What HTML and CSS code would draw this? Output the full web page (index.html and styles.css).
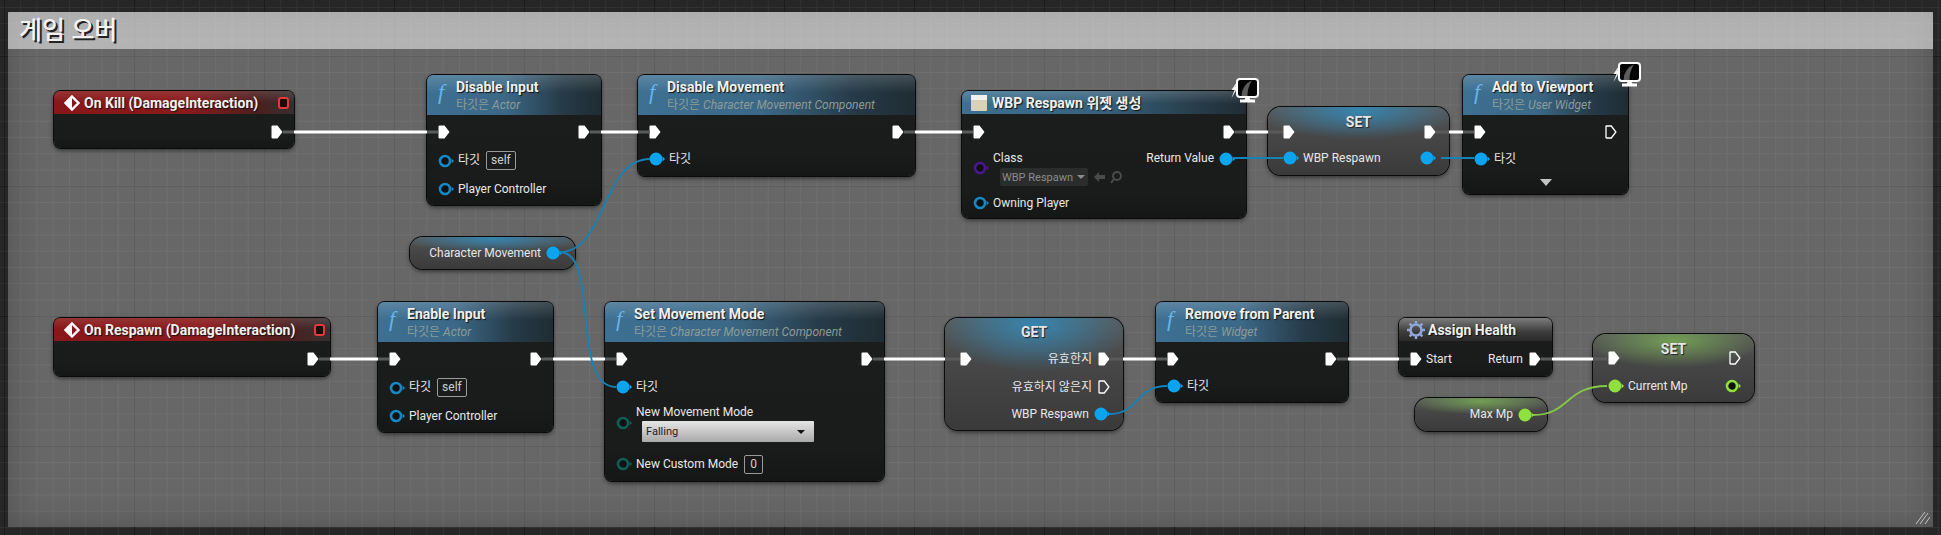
FILE: index.html

```html
<!DOCTYPE html>
<html lang="ko">
<head>
  <meta charset="UTF-8" />
  <title>게임 오버</title>
  <link rel="stylesheet" href="styles.css">
</head>
<body>
  <svg class="defs" width="0" height="0">
    <symbol id="pin-exec" viewBox="0 0 12 14"><path d="M1.5 .5H6.5L11.5 7L6.5 13.5H1.5Q.5 13.5 .5 12.5V1.5Q.5 .5 1.5 .5Z" fill="#fff"/></symbol>
    <symbol id="pin-exec-open" viewBox="0 0 12 14"><path d="M1.5 1H6.3L10.9 7L6.3 13H1.5Q1 13 1 12.5V1.5Q1 1 1.5 1Z" fill="none" stroke="#fff" stroke-width="1.3"/></symbol>
    <symbol id="pin-data" viewBox="0 0 16 14"><circle cx="7" cy="7" r="6.5" fill="currentColor"/><path d="M13.6 4.6L16 7L13.6 9.4Z" fill="currentColor"/></symbol>
    <symbol id="pin-ring" viewBox="0 0 16 14"><circle cx="7" cy="7" r="5" fill="#111" stroke="currentColor" stroke-width="2.6"/><path d="M13.6 4.6L16 7L13.6 9.4Z" fill="currentColor"/></symbol>
    <symbol id="ico-monitor" viewBox="0 0 30 25">
      <path d="M7.500 3L1.500 12H4.500L1.500 20L8 9H5.500Z" fill="#f4f4f4"/>
      <rect x="7" y="1" width="21" height="18" rx="3" fill="#050505" stroke="#fff" stroke-width="2"/>
      <path d="M11.500 18Q12.500 6 22 2.500Q17.500 9 17.500 18Z" fill="#5c5c5c"/>
      <path d="M15.500 20H19.500L20.500 21.500H25V24.500H10V21.500H14.500Z" fill="#fff"/>
    </symbol>
  </svg>

  <div class="graph">
    <div class="comment">
      <div class="comment-title">게임 오버</div>
      <svg class="grip" width="15" height="13" viewBox="0 0 15 13"><path d="M1 13L10 1M5 13L13 2M10 13L15 6" stroke="#c4c4c4" stroke-width="1" fill="none"/></svg>
    </div>

    <div class="node n-onkill">
      <div class="node-head head-event">
        <svg class="ico-event" width="16" height="16" viewBox="0 0 16 16"><path d="M8 1.500L14.500 8L8 14.500L1.500 8Z" fill="none" stroke="#fff" stroke-width="2.400"/><path d="M8 2V14L2 8Z" fill="#fff"/></svg>
        <span class="title">On Kill (DamageInteraction)</span>
        <i class="event-stop"></i>
      </div>
      <div class="node-body body-single">
        <div class="row row-end"><svg class="pin-x"><use href="#pin-exec"/></svg></div>
      </div>
    </div>

    <div class="node n-disable-input">
      <div class="node-head head-func">
        <span class="fn">f</span>
        <div><div class="title">Disable Input</div><div class="sub">타깃은 <em>Actor</em></div></div>
      </div>
      <div class="node-body">
        <div class="row"><svg class="pin-x"><use href="#pin-exec"/></svg><span class="grow"></span><svg class="pin-x"><use href="#pin-exec"/></svg></div>
        <div class="row row-30"><svg class="pin blue"><use href="#pin-ring"/></svg><span class="label">타깃</span><span class="self">self</span></div>
        <div class="row"><svg class="pin blue"><use href="#pin-ring"/></svg><span class="label">Player Controller</span></div>
      </div>
    </div>

    <div class="node n-disable-move">
      <div class="node-head head-func">
        <span class="fn">f</span>
        <div><div class="title">Disable Movement</div><div class="sub">타깃은 <em>Character Movement Component</em></div></div>
      </div>
      <div class="node-body">
        <div class="row"><svg class="pin-x"><use href="#pin-exec"/></svg><span class="grow"></span><svg class="pin-x"><use href="#pin-exec"/></svg></div>
        <div class="row row-short"><svg class="pin sky"><use href="#pin-data"/></svg><span class="label">타깃</span></div>
      </div>
    </div>

    <div class="node n-create">
      <div class="node-head head-func head-slim">
        <svg class="ico-widget" width="16" height="16" viewBox="0 0 16 16"><rect width="16" height="16" rx="1" fill="#d9d2b6"/><rect width="16" height="5" fill="#f1f1ef"/></svg>
        <span class="title">WBP Respawn 위젯 생성</span>
      </div>
      <div class="node-body body-single">
        <div class="row"><svg class="pin-x"><use href="#pin-exec"/></svg><span class="grow"></span><svg class="pin-x"><use href="#pin-exec"/></svg></div>
        <div class="row row-class">
          <svg class="pin purple"><use href="#pin-ring"/></svg>
          <div>
            <div class="label">Class</div>
            <div class="class-pick">
              <span class="class-box">WBP Respawn<i class="caret caret-dim"></i></span>
              <svg width="32" height="14" viewBox="0 0 32 14"><path d="M1 7L6 2V5H12V9H6V12Z" fill="#4a4a4a"/><circle cx="24" cy="6" r="4" fill="none" stroke="#4a4a4a" stroke-width="2"/><path d="M21 9L18 13" stroke="#4a4a4a" stroke-width="2"/></svg>
            </div>
          </div>
          <span class="grow"></span>
          <span class="label return-label">Return Value</span>
          <svg class="pin sky pin-top"><use href="#pin-data"/></svg>
        </div>
        <div class="row"><svg class="pin blue"><use href="#pin-ring"/></svg><span class="label">Owning Player</span></div>
      </div>
      <svg class="ico-monitor" width="30" height="25"><use href="#ico-monitor"/></svg>
    </div>

    <div class="node compact glow-blue n-set-widget">
      <div class="compact-title">SET</div>
      <div class="row"><svg class="pin-x"><use href="#pin-exec"/></svg><span class="grow"></span><svg class="pin-x"><use href="#pin-exec"/></svg></div>
      <div class="row row-24"><svg class="pin sky"><use href="#pin-data"/></svg><span class="label">WBP Respawn</span><span class="grow"></span><svg class="pin sky"><use href="#pin-data"/></svg></div>
    </div>

    <div class="node n-viewport">
      <div class="node-head head-func">
        <span class="fn">f</span>
        <div><div class="title">Add to Viewport</div><div class="sub">타깃은 <em>User Widget</em></div></div>
      </div>
      <div class="node-body">
        <div class="row"><svg class="pin-x"><use href="#pin-exec"/></svg><span class="grow"></span><svg class="pin-x"><use href="#pin-exec-open"/></svg></div>
        <div class="row row-short"><svg class="pin sky"><use href="#pin-data"/></svg><span class="label">타깃</span></div>
        <div class="expand"><i class="caret caret-big"></i></div>
      </div>
      <svg class="ico-monitor" width="30" height="25"><use href="#ico-monitor"/></svg>
    </div>

    <div class="node compact glow-blue glow-thin n-char-move">
      <div class="row row-end"><span class="label">Character Movement</span><svg class="pin sky"><use href="#pin-data"/></svg></div>
    </div>

    <div class="node n-onrespawn">
      <div class="node-head head-event">
        <svg class="ico-event" width="16" height="16" viewBox="0 0 16 16"><path d="M8 1.500L14.500 8L8 14.500L1.500 8Z" fill="none" stroke="#fff" stroke-width="2.400"/><path d="M8 2V14L2 8Z" fill="#fff"/></svg>
        <span class="title">On Respawn (DamageInteraction)</span>
        <i class="event-stop"></i>
      </div>
      <div class="node-body body-single">
        <div class="row row-end"><svg class="pin-x"><use href="#pin-exec"/></svg></div>
      </div>
    </div>

    <div class="node n-enable-input">
      <div class="node-head head-func">
        <span class="fn">f</span>
        <div><div class="title">Enable Input</div><div class="sub">타깃은 <em>Actor</em></div></div>
      </div>
      <div class="node-body">
        <div class="row"><svg class="pin-x"><use href="#pin-exec"/></svg><span class="grow"></span><svg class="pin-x"><use href="#pin-exec"/></svg></div>
        <div class="row row-30"><svg class="pin blue"><use href="#pin-ring"/></svg><span class="label">타깃</span><span class="self">self</span></div>
        <div class="row"><svg class="pin blue"><use href="#pin-ring"/></svg><span class="label">Player Controller</span></div>
      </div>
    </div>

    <div class="node n-move-mode">
      <div class="node-head head-func">
        <span class="fn">f</span>
        <div><div class="title">Set Movement Mode</div><div class="sub">타깃은 <em>Character Movement Component</em></div></div>
      </div>
      <div class="node-body">
        <div class="row"><svg class="pin-x"><use href="#pin-exec"/></svg><span class="grow"></span><svg class="pin-x"><use href="#pin-exec"/></svg></div>
        <div class="row"><svg class="pin sky"><use href="#pin-data"/></svg><span class="label">타깃</span></div>
        <div class="row row-mode">
          <svg class="pin teal"><use href="#pin-ring"/></svg>
          <div>
            <div class="label">New Movement Mode</div>
            <div class="enum-box">Falling<i class="caret"></i></div>
          </div>
        </div>
        <div class="row"><svg class="pin teal"><use href="#pin-ring"/></svg><span class="label">New Custom Mode</span><span class="self self-num">0</span></div>
      </div>
    </div>

    <div class="node compact glow-blue n-get">
      <div class="compact-title">GET</div>
      <div class="row"><svg class="pin-x"><use href="#pin-exec"/></svg><span class="grow"></span><span class="label">유효한지</span><svg class="pin-x"><use href="#pin-exec"/></svg></div>
      <div class="row row-end"><span class="label">유효하지 않은지</span><svg class="pin-x"><use href="#pin-exec-open"/></svg></div>
      <div class="row row-end row-short"><span class="label">WBP Respawn</span><svg class="pin sky"><use href="#pin-data"/></svg></div>
    </div>

    <div class="node n-remove">
      <div class="node-head head-func">
        <span class="fn">f</span>
        <div><div class="title">Remove from Parent</div><div class="sub">타깃은 <em>Widget</em></div></div>
      </div>
      <div class="node-body">
        <div class="row"><svg class="pin-x"><use href="#pin-exec"/></svg><span class="grow"></span><svg class="pin-x"><use href="#pin-exec"/></svg></div>
        <div class="row row-short"><svg class="pin sky"><use href="#pin-data"/></svg><span class="label">타깃</span></div>
      </div>
    </div>

    <div class="node n-assign">
      <div class="node-head head-macro">
        <svg class="ico-gear" width="20" height="20" viewBox="0 0 20 20"><circle cx="10" cy="10" r="5.500" fill="none" stroke="#8fa6d8" stroke-width="2.600"/><path d="M10 1V4M10 16V19M1 10H4M16 10H19M3.600 3.600L5.800 5.800M14.200 14.200L16.400 16.400M3.600 16.400L5.800 14.200M14.200 5.800L16.400 3.600" stroke="#8fa6d8" stroke-width="2.400"/></svg>
        <span class="title">Assign Health</span>
      </div>
      <div class="node-body body-single">
        <div class="row"><svg class="pin-x"><use href="#pin-exec"/></svg><span class="label">Start</span><span class="grow"></span><span class="label">Return</span><svg class="pin-x"><use href="#pin-exec"/></svg></div>
      </div>
    </div>

    <div class="node compact glow-green glow-thin n-max-mp">
      <div class="row row-end"><span class="label">Max Mp</span><svg class="pin lime"><use href="#pin-data"/></svg></div>
    </div>

    <div class="node compact glow-green n-set-mp">
      <div class="compact-title">SET</div>
      <div class="row"><svg class="pin-x"><use href="#pin-exec"/></svg><span class="grow"></span><svg class="pin-x"><use href="#pin-exec-open"/></svg></div>
      <div class="row"><svg class="pin lime"><use href="#pin-data"/></svg><span class="label">Current Mp</span><span class="grow"></span><svg class="pin lime"><use href="#pin-ring"/></svg></div>
    </div>

    <svg class="wires" width="1941" height="535" viewBox="0 0 1941 535" fill="none">
      <g class="wire-stub">
        <path d="M283 132H294M427 132H438M590 132H601M638 132H650M904 132H915M962 132H973M1235 132H1246M1268 132H1283M1436 132H1449M1463 132H1474"/>
        <path d="M319 359H330M378 359H389M542 359H553M605 359H616M873 359H884M945 359H960M1109 359H1123M1156 359H1167M1337 359H1348M1399 359H1410M1541 359H1552M1593 359H1607"/>
      </g>
      <g class="wire-exec">
        <path d="M294 132H427M601 132H638M915 132H962M1246 132H1268M1449 132H1463"/>
        <path d="M330 359H378M553 359H605M884 359H945M1123 359H1156M1348 359H1399M1552 359H1593"/>
      </g>
      <g class="wire-obj">
        <path d="M560 252C606 252 602 159 650 159"/>
        <path d="M560 252C600 252 570 387 616 387"/>
        <path d="M1234 158H1283M1441 158H1474"/>
        <path d="M1109 414C1140 414 1135 386 1167 386"/>
      </g>
      <path class="wire-float" d="M1533 415C1570 415 1565 386 1607 386"/>
    </svg>
  </div>
</body>
</html>
```

FILE: styles.css

```css
* {
  box-sizing: border-box;
}

body {
  margin: 0;
  background: #262626;
  font-family: Roboto, "Noto Sans CJK KR", sans-serif;
  font-size: 12px;
  color: #e8e8e8;
}

.defs {
  position: absolute;
}

.graph {
  position: relative;
  width: 1941px;
  height: 535px;
  overflow: hidden;
  background-color: #262626;
  background-image:
    linear-gradient(90deg, #1b1b1b 1px, transparent 1px),
    linear-gradient(#1b1b1b 1px, transparent 1px),
    linear-gradient(90deg, #323232 1px, transparent 1px),
    linear-gradient(#323232 1px, transparent 1px);
  background-size: 130px 130px, 130px 130px, 16.25px 16.25px, 16.25px 16.25px;
  background-position: 4px 56px, 4px 56px, 4px 7px, 4px 7px;
}

/* comment box */
.comment {
  position: absolute;
  left: 8px;
  top: 12px;
  width: 1925px;
  height: 515px;
  background: rgba(255, 255, 255, 0.3);
  border-radius: 2px 2px 0 0;
  box-shadow: inset 0 0 32px rgba(0, 0, 0, 0.22);
}

.comment-title {
  height: 37px;
  padding-left: 11px;
  background: rgba(255, 255, 255, 0.5);
  font-size: 25px;
  font-weight: 500;
  line-height: 37px;
  color: #f2f2f2;
  text-shadow: 2px 2px 0 #222;
}

.grip {
  position: absolute;
  right: 3px;
  bottom: 3px;
}

/* nodes */
.node {
  position: absolute;
  background: linear-gradient(#1c1e1d, #1a1c1b 80%, #151716);
  border-radius: 7px;
  box-shadow: 0 0 0 1px #0b0b0b, 0 2px 5px rgba(0, 0, 0, 0.6);
}

.node-head {
  display: flex;
  align-items: flex-start;
  height: 40px;
  padding: 3px 8px 0 11px;
  border-radius: 6px 6px 0 0;
}

.head-func {
  background:
    linear-gradient(rgba(255, 255, 255, 0.16), rgba(255, 255, 255, 0) 45%),
    linear-gradient(90deg, #3d7093, #3b6886 45%, #263a47 78%, #1f2c33);
}

.head-slim {
  height: 23px;
  align-items: center;
  padding: 0 8px 0 9px;
  background:
    linear-gradient(rgba(255, 255, 255, 0.16), rgba(255, 255, 255, 0) 55%),
    linear-gradient(90deg, #3d7093, #37617c 50%, #263a47 85%, #222c32);
}

.head-event {
  height: 23px;
  align-items: center;
  padding: 0 5px 0 10px;
  background:
    linear-gradient(rgba(255, 255, 255, 0.12), rgba(255, 255, 255, 0) 50%),
    linear-gradient(90deg, #881719, #8a1a1b 55%, #4c1f1f 85%, #353030);
}

.head-macro {
  height: 23px;
  align-items: center;
  padding: 0 8px 0 7px;
  background: linear-gradient(#7d7d7d, #3c3c3c 60%, #2a2a2a);
}

.title {
  font-size: 14px;
  font-weight: 700;
  line-height: 18px;
  color: #f0f0f0;
  text-shadow: 1px 1px 1px #111;
  white-space: nowrap;
}

.sub {
  font-size: 12px;
  line-height: 18px;
  color: #8d9b97;
  white-space: nowrap;
}

.fn {
  width: 18px;
  margin-top: 1px;
  font-family: "Liberation Serif", serif;
  font-size: 22px;
  font-style: italic;
  line-height: 26px;
  color: #68b4ec;
}

.ico-event {
  flex: none;
  margin-right: 4px;
}

.ico-widget {
  flex: none;
  margin-right: 5px;
}

.ico-gear {
  flex: none;
  margin-right: 2px;
}

.ico-monitor {
  position: absolute;
  top: -13px;
  right: -14px;
}

.event-stop {
  flex: none;
  width: 11px;
  height: 12px;
  margin-left: auto;
  background: #1c0a0a;
  border: 2px solid #e23a3a;
  border-radius: 3px;
}

.node-body {
  padding-top: 3px;
}

.body-single {
  padding-top: 4px;
}

/* rows and pins */
.row {
  display: flex;
  align-items: center;
  gap: 4px;
  height: 28px;
  padding: 0 11px;
  white-space: nowrap;
}

.row-end {
  justify-content: flex-end;
}

.row-short {
  height: 26px;
}

.row-24 {
  height: 24px;
}

.row-30 {
  height: 29px;
}

.row-class {
  align-items: flex-start;
  height: 43px;
  padding-top: 4px;
}

.row-mode {
  align-items: flex-start;
  height: 49px;
  padding-top: 3px;
}

.grow {
  flex: 1;
}

.label {
  line-height: 17px;
}

.label + .pin-x {
  margin-left: 2px;
}

.label + .pin {
  margin-left: 1px;
}

.pin-x {
  flex: none;
  width: 12px;
  height: 14px;
}

.pin {
  flex: none;
  width: 16px;
  height: 14px;
}

.pin-top {
  margin-top: 2px;
}

.row-class > .pin:first-child {
  margin-top: 11px;
}

.row-mode > .pin:first-child {
  margin-top: 12px;
}

.blue { color: #1689c4; }
.sky { color: #0aa4f0; }
.purple { color: #4a1691; }
.teal { color: #0f5f56; }
.lime { color: #8fe23e; }

.self {
  margin-left: 2px;
  padding: 0 4px;
  line-height: 17px;
  color: #cfcfcf;
  border: 1px solid #9a9a9a;
  border-radius: 2px;
}

.self-num {
  padding: 0 5px;
}

.class-pick {
  display: flex;
  align-items: center;
  gap: 5px;
  margin: 1px 0 0 7px;
}

.class-box {
  display: flex;
  align-items: center;
  gap: 4px;
  width: 88px;
  height: 18px;
  padding-left: 2px;
  font-size: 11px;
  color: #8b8b8b;
  background: #2b2d2c;
  border-radius: 2px;
}

.enum-box {
  display: flex;
  align-items: center;
  justify-content: space-between;
  width: 172px;
  height: 21px;
  margin: 0 0 0 6px;
  padding: 0 9px 0 4px;
  font-size: 11px;
  color: #1c1c1c;
  background: linear-gradient(#e6e6e6, #a9a9a9);
  border-radius: 1px;
}

.caret {
  width: 0;
  height: 0;
  border-left: 4px solid transparent;
  border-right: 4px solid transparent;
  border-top: 4px solid #111;
}

.caret-dim {
  border-top-color: #8b8b8b;
}

.caret-big {
  display: block;
  border-left-width: 6px;
  border-right-width: 6px;
  border-top: 7px solid #c4c4c4;
}

.expand {
  display: flex;
  justify-content: center;
  padding-top: 7px;
}

/* compact variable nodes */
.compact {
  background: linear-gradient(#5a5a5a, #474747 40%, #3a3a3a);
  border-radius: 13px;
}

.glow-blue {
  background:
    radial-gradient(ellipse 55% 42% at 50% 6%, rgba(48, 140, 190, 0.85), rgba(48, 140, 190, 0)),
    linear-gradient(#5a5a5a, #474747 40%, #3a3a3a);
}

.glow-green {
  background:
    radial-gradient(ellipse 55% 40% at 50% 10%, rgba(118, 170, 84, 0.85), rgba(118, 170, 84, 0)),
    linear-gradient(#5a5a5a, #474747 40%, #3a3a3a);
}

.compact .row {
  padding: 0 13px 0 15px;
}

.compact-title {
  height: 30px;
  margin-bottom: -19px;
  font-size: 14px;
  font-weight: 700;
  line-height: 30px;
  text-align: center;
  color: #e6e6e6;
  text-shadow: 1px 1px 1px #222;
}

.n-onkill { left: 54px; top: 91px; width: 240px; height: 57px; }
.n-disable-input { left: 427px; top: 75px; width: 174px; height: 130px; }
.n-disable-move { left: 638px; top: 75px; width: 277px; height: 101px; }
.n-create { left: 962px; top: 91px; width: 284px; height: 127px; }
.n-set-widget { left: 1268px; top: 107px; width: 181px; height: 68px; }
.n-viewport { left: 1463px; top: 75px; width: 165px; height: 119px; }
.n-char-move { left: 410px; top: 237px; width: 165px; height: 32px; }
.n-onrespawn { left: 54px; top: 318px; width: 276px; height: 58px; }
.n-enable-input { left: 378px; top: 302px; width: 175px; height: 130px; }
.n-move-mode { left: 605px; top: 302px; width: 279px; height: 179px; }
.n-get { left: 945px; top: 318px; width: 178px; height: 112px; }
.n-remove { left: 1156px; top: 302px; width: 192px; height: 100px; }
.n-assign { left: 1399px; top: 318px; width: 153px; height: 58px; }
.n-max-mp { left: 1415px; top: 398px; width: 132px; height: 33px; }
.n-set-mp { left: 1593px; top: 334px; width: 161px; height: 68px; }

.n-get .compact-title {
  height: 28px;
  margin-bottom: -1px;
  line-height: 28px;
}

.n-set-mp .compact-title {
  margin-bottom: -20px;
}

.n-char-move .row,
.n-max-mp .row {
  height: 100%;
}

/* wires */
.wires {
  position: absolute;
  left: 0;
  top: 0;
  pointer-events: none;
}

.wire-exec {
  stroke: #fff;
  stroke-width: 3;
}

.wire-stub {
  stroke: #5a5a5a;
  stroke-width: 3;
}

.wire-obj {
  stroke: #1582b8;
  stroke-width: 1.8;
}

.wire-float {
  stroke: #84c944;
  stroke-width: 1.8;
}
```
